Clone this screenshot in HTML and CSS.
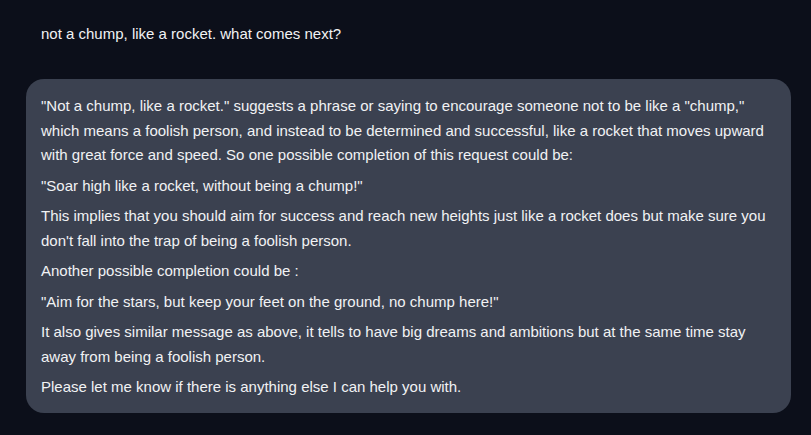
FILE: index.html
```html
<!DOCTYPE html>
<html>
<head>
<meta charset="utf-8">
<link rel="stylesheet" href="styles.css">
</head>
<body>
<div class="chat">
  <div class="user">not a chump, like a rocket. what comes next?</div>
  <div class="bot">
    <p>"Not a chump, like a rocket." suggests a phrase or saying to encourage someone not to be like a "chump," which means a foolish person, and instead to be determined and successful, like a rocket that moves upward with great force and speed. So one possible completion of this request could be:</p>
    <p>"Soar high like a rocket, without being a chump!"</p>
    <p>This implies that you should aim for success and reach new heights just like a rocket does but make sure you don't fall into the trap of being a foolish person.</p>
    <p>Another possible completion could be :</p>
    <p>"Aim for the stars, but keep your feet on the ground, no chump here!"</p>
    <p>It also gives similar message as above, it tells to have big dreams and ambitions but at the same time stay away from being a foolish person.</p>
    <p>Please let me know if there is anything else I can help you with.</p>
  </div>
</div>
</body>
</html>
```

FILE: styles.css
```css
html, body {
  margin: 0;
  padding: 0;
  background: #0c0f1a;
}
body {
  font-family: "Liberation Sans", Arial, sans-serif;
  font-size: 15px;
  color: #f1f2f4;
}
.chat {
  padding: 21px 20px 0 26px;
  display: flex;
  flex-direction: column;
  gap: 33px;
}
.user {
  padding: 0 15px;
  line-height: 25px;
}
.bot {
  background: #3b4150;
  border-radius: 18px;
  padding: 15px 15px 13px;
}
.bot p {
  margin: 0 0 6px;
  line-height: 24.5px;
}
.bot p:last-child {
  margin-bottom: 0;
}
```
